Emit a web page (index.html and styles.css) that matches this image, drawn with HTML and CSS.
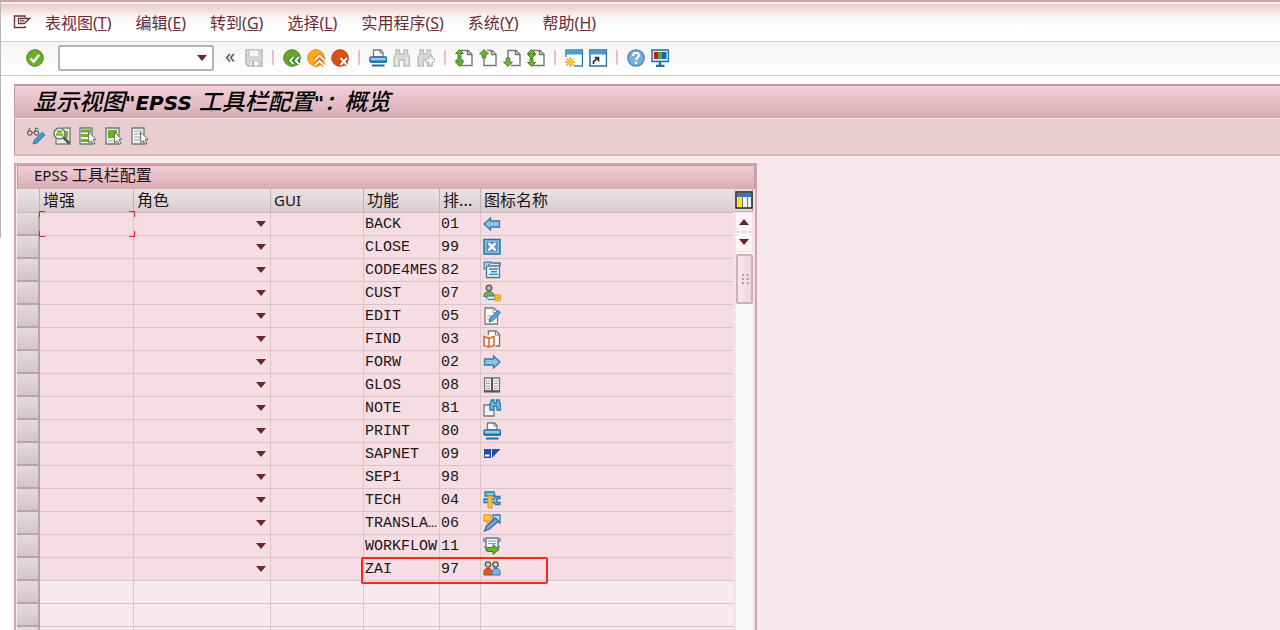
FILE: index.html
```
<!DOCTYPE html>
<html lang="zh-CN">
<head>
<meta charset="utf-8">
<title>显示视图"EPSS 工具栏配置"：概览</title>
<link rel="stylesheet" href="styles.css">
</head>
<body>
<svg class="sprite" aria-hidden="true">
  <symbol id="exit" viewBox="0 0 18 18"><path d="M12 4.500V3H1.500v11.500H12V13" fill="none" stroke="#6d323b" stroke-width="1.400"/><path d="M16.500 5.500H5.500v5h6zM7 7.800h4.500" fill="none" stroke="#6d323b" stroke-width="1.300"/></symbol>
  <symbol id="ok" viewBox="0 0 18 18"><circle cx="9" cy="9" r="8.300" fill="#69ae23" stroke="#4d7f32"/><path d="M4.500 9.500l3.200 3.200 5.500-7" fill="none" stroke="#fff" stroke-width="2.400"/></symbol>
  <symbol id="save" viewBox="0 0 18 18"><path d="M1 1h16v16H3l-2-2z" fill="#d9d9d9" stroke="#b8b8b8" stroke-width="1.500"/><path d="M4 1h10v7H4z" fill="#f7f7f7" stroke="#c0c0c0"/><path d="M5 12h9v5H5z" fill="#fff" stroke="#b8b8b8"/><path d="M7 13h2v4H7z" fill="#b0b0b0"/></symbol>
  <symbol id="back" viewBox="0 0 18 18"><circle cx="9" cy="9" r="8.300" fill="#65ab22" stroke="#3f8230"/><path d="M10.500 8L7 11.500l3.500 3.500M16 8l-3.500 3.500L16 15" fill="none" stroke="#39752b" stroke-width="4"/><path d="M10.500 8L7 11.500l3.500 3.500M16 8l-3.500 3.500L16 15" fill="none" stroke="#fff" stroke-width="2"/></symbol>
  <symbol id="up" viewBox="0 0 18 18"><circle cx="9" cy="9" r="8.300" fill="#ffad08" stroke="#e98420"/><path d="M8 11l4.500-4.500L17 11M8 16.500l4.500-4.500 4.500 4.500" fill="none" stroke="#e46b1d" stroke-width="4"/><path d="M8 11l4.500-4.500L17 11M8 16.500l4.500-4.500 4.500 4.500" fill="none" stroke="#fff" stroke-width="1.900"/></symbol>
  <symbol id="cancel" viewBox="0 0 18 18"><circle cx="9" cy="9" r="8.300" fill="#d95110" stroke="#b84320"/><path d="M9.500 9l6.500 7M16 9l-6.500 7" stroke="#a93312" stroke-width="4"/><path d="M9.500 9l6.500 7M16 9l-6.500 7" stroke="#fff" stroke-width="2.200"/></symbol>
  <symbol id="print" viewBox="0 0 18 18"><path d="M4.500 8V1h7l2.500 2.500V8z" fill="#fff" stroke="#777" stroke-width="1.300"/><path d="M11 1v3h3" fill="none" stroke="#777"/><rect x="1" y="8" width="16.500" height="5" rx="1" fill="#a3c7e5" stroke="#1d70a5" stroke-width="1.500"/><path d="M1 12.500h17" stroke="#1d70a5" stroke-width="2"/><path d="M3 16.500h12.500" stroke="#1d70a5" stroke-width="2"/></symbol>
  <symbol id="find" viewBox="0 0 18 18"><path d="M3 1h3.500v4H11V1h3.500v4L16.500 8v9H11v-6H6.500v6H1V8l2-3z" fill="#d9d9d9" stroke="#bcbcbc" stroke-width="1.300"/><path d="M3.500 9v7M14 9v7" stroke="#f3f3f3" stroke-width="1.500"/></symbol>
  <symbol id="findnext" viewBox="0 0 18 18"><path d="M3 1h3.500v4H10V1h3.500v4L15 8v9h-4.500v-6H6.500v6H1V8l2-3z" fill="#d9d9d9" stroke="#bcbcbc" stroke-width="1.300"/><path d="M12 7h3v3h3v3h-3v3h-3v-3H9v-3h3z" fill="#fff" stroke="#b3b3b3"/></symbol>
  <symbol id="doc" viewBox="0 0 18 18"><path d="M6 1.500h7l4 4v11H6" fill="#fff" stroke="#777" stroke-width="1.400"/><path d="M12.500 1.500v4H17" fill="none" stroke="#777" stroke-width="1.400"/></symbol>
  <symbol id="pfirst" viewBox="0 0 18 18"><use href="#doc"/><path d="M4.500 .5l4 4H6v4H3v-4H.5zM4.500 8l4 4H6v1h2.500l-4 4.500-4-4.500H3v-1H.5z" fill="#6db42c" stroke="#3c8b2e"/></symbol>
  <symbol id="pprev" viewBox="0 0 18 18"><path d="M5 9v7.500h12v-11l-4-4H8" fill="#fff" stroke="#777" stroke-width="1.400"/><path d="M12.500 1.500v4H17" fill="none" stroke="#777" stroke-width="1.400"/><path d="M5 .5L9.500 5H6.800v4H3.200V5H.5z" fill="#6db42c" stroke="#3c8b2e"/></symbol>
  <symbol id="pnext" viewBox="0 0 18 18"><path d="M5 9V1.500h8l4 4v11H8" fill="#fff" stroke="#777" stroke-width="1.400"/><path d="M12.500 1.500v4H17" fill="none" stroke="#777" stroke-width="1.400"/><path d="M5 17.500L9.500 13H6.800V9H3.200v4H.5z" fill="#6db42c" stroke="#3c8b2e"/></symbol>
  <symbol id="plast" viewBox="0 0 18 18"><use href="#doc"/><path d="M4.500 .5l4 4H6v1h2.500l-4 4-4-4H3v-1H.5zM4.500 17.500l4-4H6v-4H3v4H.5z" fill="#6db42c" stroke="#3c8b2e"/></symbol>
  <symbol id="newwin" viewBox="0 0 18 18"><rect x="1" y="1" width="16.500" height="16" fill="#fff" stroke="#1f72a6" stroke-width="1.300"/><path d="M1 3.500h16" stroke="#4b9cc8" stroke-width="4"/><path d="M0 8h9v10H0z" fill="#fff"/><path d="M5 8v10M0 13h10M1.500 9.500l7 7M8.500 9.500l-7 7" stroke="#f59c18" stroke-width="1.500"/><circle cx="5" cy="13" r="2.500" fill="#ffc32b"/></symbol>
  <symbol id="shortcut" viewBox="0 0 18 18"><rect x="1" y="1" width="16.500" height="16" fill="#fff" stroke="#1f72a6" stroke-width="1.500"/><path d="M1 3.500h16" stroke="#4b9cc8" stroke-width="4"/><path d="M4.500 15v-2.500L9 9M5.500 8.500h4v4" fill="none" stroke="#333" stroke-width="1.700"/></symbol>
  <symbol id="help" viewBox="0 0 18 18"><circle cx="9" cy="9" r="8.200" fill="#7baed8" stroke="#4d83b2" stroke-width="1.300"/><path d="M6 7c0-4 6-4 6-.8C12 8.500 9 8.500 9 11" fill="none" stroke="#fff" stroke-width="2"/><circle cx="9" cy="13.700" r="1.300" fill="#fff"/></symbol>
  <symbol id="monitor" viewBox="0 0 18 18"><rect x="1" y="1" width="16.500" height="11.500" fill="#d9ebf5" stroke="#1e70a3" stroke-width="1.500"/><path d="M3 3h4v7H3z" fill="#d3161c"/><path d="M7 3h4v7H7z" fill="#61a629"/><path d="M11 3h4.500v7H11z" fill="#1766b2"/><path d="M9 12v5M5 17h8.500" stroke="#1e70a3" stroke-width="2.400"/></symbol>
  <symbol id="glasspen" viewBox="0 0 18 18"><g fill="none" stroke="#666" stroke-width="1.200"><circle cx="2.800" cy="6" r="2.200"/><circle cx="9.500" cy="6" r="2.200"/><path d="M.8 5L3 1M7.500 5L9 1l2.500 1M5 5.500h2"/></g><path d="M6 17l1.500-4 7.500-7.500 3 2.500-8 8z" fill="#4b9ccb" stroke="#2776a7"/></symbol>
  <symbol id="magnify" viewBox="0 0 18 18"><path d="M9 1h8v16H3v-5" fill="#eee" stroke="#7e8779" stroke-width="1.500"/><path d="M12 4h3v7h-3z" fill="#72b927"/><circle cx="6.500" cy="6.500" r="5.500" fill="#f2f7eb" stroke="#777" stroke-width="1.500"/><path d="M4 4.500h5M3 7.500h7" stroke="#72b927" stroke-width="2.400"/><path d="M10.500 10.500l6 6" stroke="#555" stroke-width="2.800"/></symbol>
  <symbol id="cursor" viewBox="0 0 18 18"><path d="M9.500 5l7.500 7.500-3 .3 2 3.500-1.700 1-2-3.500-2.500 2z" fill="#fff" stroke="#666"/></symbol>
  <symbol id="selall" viewBox="0 0 18 18"><path d="M1 1h12v16H1z" fill="#f4f4f4" stroke="#777" stroke-width="1.300"/><path d="M2 4h10M2 8.500h9M2 13.500h8" stroke="#67b21b" stroke-width="3"/><use href="#cursor"/></symbol>
  <symbol id="selblock" viewBox="0 0 18 18"><path d="M1 1h13v16H1z" fill="#e9e9e9" stroke="#777" stroke-width="1.300"/><path d="M3 3h9v8H3z" fill="#67b21b"/><path d="M3 14h7" stroke="#bbb"/><use href="#cursor"/></symbol>
  <symbol id="desel" viewBox="0 0 18 18"><path d="M1 1h12v16H1z" fill="#f4f4f4" stroke="#777" stroke-width="1.300"/><path d="M3 4h8M3 7h7M3 10h6M3 13h6" stroke="#aaa"/><use href="#cursor"/></symbol>
  <symbol id="left" viewBox="0 0 18 18"><path d="M1 9l6.500-6v3h9v6h-9v3z" fill="#8fc1e1" stroke="#2d7bad" stroke-width="1.300"/></symbol>
  <symbol id="right" viewBox="0 0 18 18"><path d="M17 9l-6.500-6v3h-9v6h9v3z" fill="#8fc1e1" stroke="#2d7bad" stroke-width="1.300"/></symbol>
  <symbol id="close" viewBox="0 0 18 18"><path d="M1 1.500h16v14.500H1z" fill="#8fbddc" stroke="#2674a5" stroke-width="1.500"/><path d="M4 4.500h10v8.500H4z" fill="#679fc7" stroke="#2674a5" stroke-width=".7"/><path d="M5.500 5l7 7.500M12.500 5l-7 7.500" stroke="#fff" stroke-width="2.400"/></symbol>
  <symbol id="code" viewBox="0 0 18 18"><path d="M3.500 5h13v11.500h-13z" fill="#edf5fa" stroke="#4a7895" stroke-width="1.300"/><path d="M1 1h8L1 8.500z" fill="#a1cae6" stroke="#2979aa"/><path d="M9 2h8v3" fill="none" stroke="#2979aa" stroke-width="1.500"/><path d="M6 8h9M8 10.700h6M6 13.400h9" stroke="#3284b6" stroke-width="1.400"/></symbol>
  <symbol id="cust" viewBox="0 0 18 18"><path d="M1 12.500V10l3-2h4l3 2v2.500z" fill="#70b44b" stroke="#43822f"/><circle cx="6" cy="4" r="2.800" fill="#b6b6b6" stroke="#555" stroke-width="1.300"/><path d="M4 12h8v3.500H5L3.500 14z" fill="#d4e8f4" stroke="#3278a3"/><rect x="12" y="11" width="5.300" height="5.500" rx="1" fill="#ffd04a" stroke="#ee9c13" stroke-width="1.400"/><circle cx="14.600" cy="13.700" r="1" fill="#b97a10"/></symbol>
  <symbol id="edit" viewBox="0 0 18 18"><path d="M2 1h8.500l4 4v12H2z" fill="#fff" stroke="#777" stroke-width="1.300"/><path d="M10 1v4.500h4M4 12h3M4 9h4" fill="none" stroke="#999"/><path d="M6 15l1-4 8-7.500 2.500 2-8 8.500z" fill="#5aa5d0" stroke="#2876a8"/></symbol>
  <symbol id="book" viewBox="0 0 18 18"><path d="M5.500 5V1H13l3.500 3.500V16h-4" fill="#fff" stroke="#777" stroke-width="1.400"/><path d="M12.500 1v4H17" fill="none" stroke="#777"/><path d="M1 6.500l5 2 5-2v9l-5 1.500-5-1.500zM6 8.500V17" fill="#fff" stroke="#df6538" stroke-width="1.600"/></symbol>
  <symbol id="glos" viewBox="0 0 18 18"><path d="M1.500 2h15v13h-15z" fill="#f4f4f4" stroke="#777" stroke-width="1.300"/><path d="M1 15.500h16M9 2v14" stroke="#555" stroke-width="2"/><path d="M3 5h4M3 7.500h4M3 10h4M3 12.500h4M11 5h4M11 7.500h4M11 10h4M11 12.500h4" stroke="#888" stroke-dasharray="1.500 .6"/></symbol>
  <symbol id="note" viewBox="0 0 18 18"><path d="M8 6H1v11h10v-5" fill="#f4f4f4" stroke="#777" stroke-width="1.300"/><path d="M8.500 1H11v3h2.500V1H16l1.500 4v6H14V7h-3v4H7V5z" fill="#79b4d9" stroke="#297ba9" stroke-width="1.300"/></symbol>
  <symbol id="sap" viewBox="0 0 18 18"><path d="M1 4h7v9H1z" fill="#24509b"/><path d="M2 9.500h4.500v2H2z" fill="#fff"/><path d="M9 4h8.500L9 13z" fill="#24509b"/></symbol>
  <symbol id="tech" viewBox="0 0 18 18"><path d="M1 8h10l1.500-2.500h4.500v2h-3v4h3v2h-4.500L11 11.500H1z" fill="#89bfdf" stroke="#2879a8" stroke-width="1.300"/><path d="M2 1h9l1 4H2z" fill="#8fc2e0" stroke="#2879a8" stroke-width="1.300"/><path d="M5 5h4v12H5z" fill="#ffc043" stroke="#ed8e18"/></symbol>
  <symbol id="trans" viewBox="0 0 18 18"><path d="M1 1h7v6H6L4 9V7H1z" fill="#ffc94f" stroke="#f19a1d" stroke-width="1.300"/><path d="M10 1h7v8l-3-2h-4z" fill="#c0dff0" stroke="#2878aa" stroke-width="1.300"/><path d="M1.500 17l2-5 9-8 3 3-9 8z" fill="#78a4d3" stroke="#3d69a3" stroke-width="1.300"/></symbol>
  <symbol id="flow" viewBox="0 0 18 18"><path d="M3 1h12v12H3zM1 1v3h2M17 1v3h-2M1 10h2M17 10h-2" fill="#eef4f8" stroke="#607d90" stroke-width="1.400"/><path d="M5 4h8M5 6.500h8" stroke="#72a5c6"/><path d="M4 10.500h6V7.500l6 5-6 5v-3H4z" fill="#68b52c" stroke="#40802b"/></symbol>
  <symbol id="people" viewBox="0 0 18 18"><path d="M1 15v-4.500l2-2h4l2 2V15z" fill="#dd5c2c" stroke="#a9401e"/><path d="M9 15v-4.500l2-2h4l2 2V15z" fill="#80b5d8" stroke="#3673a4"/><circle cx="5" cy="4.500" r="2.700" fill="#d0d0d0" stroke="#555" stroke-width="1.300"/><circle cx="12.500" cy="4.500" r="2.700" fill="#d0d0d0" stroke="#555" stroke-width="1.300"/></symbol>
  <symbol id="columns" viewBox="0 0 18 18"><path d="M1 1h16v16H1z" fill="#eef2f5" stroke="#222" stroke-width="1.500"/><path d="M2 4h14" stroke="#2d7bb8" stroke-width="4"/><path d="M2 6h5v10H2z" fill="#ffe51e"/><path d="M7.500 2v14M12.500 2v14" stroke="#777"/></symbol>
</svg>

<nav class="menubar" aria-label="菜单">
  <button class="icon-btn" aria-label="系统菜单"><svg><use href="#exit"/></svg></button>
  <button class="menu">表视图<span class="key">(<u>T</u>)</span></button>
  <button class="menu">编辑<span class="key">(<u>E</u>)</span></button>
  <button class="menu">转到<span class="key">(<u>G</u>)</span></button>
  <button class="menu">选择<span class="key">(<u>L</u>)</span></button>
  <button class="menu">实用程序<span class="key">(<u>S</u>)</span></button>
  <button class="menu">系统<span class="key">(<u>Y</u>)</span></button>
  <button class="menu">帮助<span class="key">(<u>H</u>)</span></button>
</nav>

<div class="toolbar" role="toolbar" aria-label="标准工具栏">
  <button class="icon-btn" aria-label="回车"><svg><use href="#ok"/></svg></button>
  <div class="command"><input type="text" aria-label="命令"><button class="drop" aria-label="命令历史"></button></div>
  <button class="collapse" aria-label="收起">«</button>
  <button class="icon-btn" aria-label="保存"><svg><use href="#save"/></svg></button>
  <span class="sep"></span>
  <button class="icon-btn" aria-label="返回"><svg><use href="#back"/></svg></button>
  <button class="icon-btn" aria-label="退出"><svg><use href="#up"/></svg></button>
  <button class="icon-btn" aria-label="取消"><svg><use href="#cancel"/></svg></button>
  <span class="sep"></span>
  <button class="icon-btn" aria-label="打印"><svg><use href="#print"/></svg></button>
  <button class="icon-btn" aria-label="查找"><svg><use href="#find"/></svg></button>
  <button class="icon-btn" aria-label="继续查找"><svg><use href="#findnext"/></svg></button>
  <span class="sep"></span>
  <button class="icon-btn" aria-label="第一页"><svg><use href="#pfirst"/></svg></button>
  <button class="icon-btn" aria-label="上一页"><svg><use href="#pprev"/></svg></button>
  <button class="icon-btn" aria-label="下一页"><svg><use href="#pnext"/></svg></button>
  <button class="icon-btn" aria-label="最后一页"><svg><use href="#plast"/></svg></button>
  <span class="sep"></span>
  <button class="icon-btn" aria-label="新建会话"><svg><use href="#newwin"/></svg></button>
  <button class="icon-btn" aria-label="快捷方式"><svg><use href="#shortcut"/></svg></button>
  <span class="sep"></span>
  <button class="icon-btn" aria-label="帮助"><svg><use href="#help"/></svg></button>
  <button class="icon-btn" aria-label="定制布局"><svg><use href="#monitor"/></svg></button>
</div>

<main class="work">
  <header class="heading">
    <h1>显示视图<span class="latin">"EPSS </span>工具栏配置<span class="latin">"：</span>概览</h1>
  </header>
  <div class="actions" role="toolbar" aria-label="应用工具栏">
    <button class="icon-btn" aria-label="显示/更改"><svg><use href="#glasspen"/></svg></button>
    <button class="icon-btn" aria-label="明细"><svg><use href="#magnify"/></svg></button>
    <button class="icon-btn" aria-label="全选"><svg><use href="#selall"/></svg></button>
    <button class="icon-btn" aria-label="选择块"><svg><use href="#selblock"/></svg></button>
    <button class="icon-btn" aria-label="取消全选"><svg><use href="#desel"/></svg></button>
  </div>

  <section class="panel">
    <h2><span class="small">EPSS </span>工具栏配置</h2>
    <div class="grid">
      <table>
        <colgroup><col class="c-sel"><col class="c-enh"><col class="c-role"><col class="c-gui"><col class="c-func"><col class="c-sort"><col></colgroup>
        <thead><tr><th></th><th>增强</th><th>角色</th><th><span class="small">GUI</span></th><th>功能</th><th>排...</th><th>图标名称</th></tr></thead>
        <tbody>
          <tr><td class="sel"></td><td class="focus"><span class="corners"></span></td><td><select aria-label="角色"></select></td><td></td><td>BACK</td><td>01</td><td><svg><use href="#left"/></svg></td></tr>
          <tr><td class="sel"></td><td></td><td><select aria-label="角色"></select></td><td></td><td>CLOSE</td><td>99</td><td><svg><use href="#close"/></svg></td></tr>
          <tr><td class="sel"></td><td></td><td><select aria-label="角色"></select></td><td></td><td>CODE4MES</td><td>82</td><td><svg><use href="#code"/></svg></td></tr>
          <tr><td class="sel"></td><td></td><td><select aria-label="角色"></select></td><td></td><td>CUST</td><td>07</td><td><svg><use href="#cust"/></svg></td></tr>
          <tr><td class="sel"></td><td></td><td><select aria-label="角色"></select></td><td></td><td>EDIT</td><td>05</td><td><svg><use href="#edit"/></svg></td></tr>
          <tr><td class="sel"></td><td></td><td><select aria-label="角色"></select></td><td></td><td>FIND</td><td>03</td><td><svg><use href="#book"/></svg></td></tr>
          <tr><td class="sel"></td><td></td><td><select aria-label="角色"></select></td><td></td><td>FORW</td><td>02</td><td><svg><use href="#right"/></svg></td></tr>
          <tr><td class="sel"></td><td></td><td><select aria-label="角色"></select></td><td></td><td>GLOS</td><td>08</td><td><svg><use href="#glos"/></svg></td></tr>
          <tr><td class="sel"></td><td></td><td><select aria-label="角色"></select></td><td></td><td>NOTE</td><td>81</td><td><svg><use href="#note"/></svg></td></tr>
          <tr><td class="sel"></td><td></td><td><select aria-label="角色"></select></td><td></td><td>PRINT</td><td>80</td><td><svg><use href="#print"/></svg></td></tr>
          <tr><td class="sel"></td><td></td><td><select aria-label="角色"></select></td><td></td><td>SAPNET</td><td>09</td><td><svg><use href="#sap"/></svg></td></tr>
          <tr><td class="sel"></td><td></td><td><select aria-label="角色"></select></td><td></td><td>SEP1</td><td>98</td><td></td></tr>
          <tr><td class="sel"></td><td></td><td><select aria-label="角色"></select></td><td></td><td>TECH</td><td>04</td><td><svg><use href="#tech"/></svg></td></tr>
          <tr><td class="sel"></td><td></td><td><select aria-label="角色"></select></td><td></td><td>TRANSLA…</td><td>06</td><td><svg><use href="#trans"/></svg></td></tr>
          <tr><td class="sel"></td><td></td><td><select aria-label="角色"></select></td><td></td><td>WORKFLOW</td><td>11</td><td><svg><use href="#flow"/></svg></td></tr>
          <tr><td class="sel"></td><td></td><td><select aria-label="角色"></select></td><td></td><td class="marked">ZAI<span class="frame"></span></td><td>97</td><td><svg><use href="#people"/></svg></td></tr>
          <tr class="empty"><td class="sel"></td><td></td><td></td><td></td><td></td><td></td><td></td></tr>
          <tr class="empty"><td class="sel"></td><td></td><td></td><td></td><td></td><td></td><td></td></tr>
          <tr class="empty"><td class="sel"></td><td></td><td></td><td></td><td></td><td></td><td></td></tr>
        </tbody>
      </table>
      <div class="side">
        <button class="config" aria-label="表设置"><svg><use href="#columns"/></svg></button>
        <button class="step step-up" aria-label="向上滚动"></button>
        <button class="step" aria-label="向下滚动"></button>
        <div class="track"><div class="thumb"><svg viewBox="0 0 18 18"><path d="M7 4v10M11.500 4v10" stroke="#b99aa2" stroke-width="2" stroke-dasharray="2 2"/></svg></div></div>
      </div>
    </div>
  </section>
</main>
</body>
</html>
```
FILE: styles.css
```
* { box-sizing: border-box; }
body {
  margin: 0;
  padding-left: 1px;
  height: 100vh;
  overflow: hidden;
  display: flex;
  flex-direction: column;
  background: linear-gradient(#b9b4b6, #b9b4b6) 0 0 / 1px 238px no-repeat #fff;
  color: #1c1416;
  font: 16px/22px "Noto Sans CJK SC", sans-serif;
}
button {
  border: 0;
  padding: 0;
  background: none;
  font: inherit;
  color: inherit;
}
svg { display: block; width: 18px; height: 18px; }
.sprite { position: absolute; width: 0; height: 0; }
.icon-btn { width: 18px; height: 18px; flex: none; }
.small { font: 15px/16px "Noto Sans", sans-serif; }
.key { font: 16px/16px "Noto Sans", sans-serif; }

.menubar {
  display: flex;
  align-items: center;
  gap: 24px;
  height: 42px;
  flex: none;
  padding: 0 12px;
  border-top: 2px solid #c6a4ac;
  border-bottom: 1px solid #d6cfd1;
  background: linear-gradient(#f9eef0 0 2px, #e9c9cc 2px, #faf3f3 14px, #fff 24px);
  color: #6a2b35;
}
.menubar .icon-btn { margin-right: -10px; }
.menu { white-space: nowrap; }

.toolbar {
  display: flex;
  align-items: center;
  gap: 6px;
  height: 34px;
  flex: none;
  padding: 0 25px 2px;
  border-bottom: 1px solid #d6cfd1;
  background: linear-gradient(#f8f3f3, #fff);
}
.command {
  display: flex;
  align-items: center;
  width: 156px;
  height: 26px;
  margin: 0 2px 0 8px;
  border: 2px solid #b9b1b3;
  border-radius: 2px;
  background: #fff;
}
.command input { flex: 1; min-width: 0; border: 0; outline: 0; background: none; }
.drop, .step, select {
  background: url("data:image/svg+xml,%3Csvg xmlns='http://www.w3.org/2000/svg' width='10' height='6'%3E%3Cpath d='M0 0h10L5 6z' fill='%23692631'/%3E%3C/svg%3E") no-repeat center;
}
.drop { width: 20px; height: 20px; }
.collapse { width: 16px; margin-right: 1px; padding-bottom: 4px; font: 20px/18px "Noto Sans", sans-serif; color: #555; }
.sep { width: 2px; height: 15px; margin: 0 3px; background: #e7bfc5; }

.work {
  flex: 1;
  min-height: 0;
  overflow: hidden;
  padding: 8px 0 0 13px;
  background: linear-gradient(90deg, #fff 13px, transparent 13px), linear-gradient(#fcf6f6, #fff 8px, #f7e9ec 8px);
}
.heading {
  border: 1px solid #c49ba5;
  border-top-width: 2px;
  border-right: 0;
  border-bottom: 1px solid #f4e3e7;
  background: linear-gradient(#f0d1d8, #d9acb7);
}
h1 {
  margin: 0;
  padding: 0 0 4px 18px;
  font: italic 500 23px/28px "Noto Sans CJK SC", sans-serif;
  color: #000;
  white-space: nowrap;
}
.latin { font: italic bold 20px/20px "DejaVu Sans", "Noto Sans CJK SC", sans-serif; }
.actions {
  display: flex;
  gap: 8px;
  padding: 8px 12px 9px;
  border-left: 1px solid #c49ba5;
  border-bottom: 2px solid #d6b7bf;
  background: #e8cdd3;
}

.panel {
  max-width: 743px;
  margin-top: 7px;
  border: 2px solid #d3a3ae;
  border-bottom: 0;
  padding-left: 1px;
}
h2 {
  margin: 0;
  padding: 0 0 6px 16px;
  border: 1px solid #c796a3;
  border-bottom: 0;
  background: linear-gradient(#efd0d7, #d9aab6);
  font-size: 16px;
  font-weight: 400;
  line-height: 16px;
}
.grid { display: grid; grid-template-columns: 1fr 22px; }
table { width: 100%; table-layout: fixed; border-collapse: separate; border-spacing: 0; }
.c-sel { width: 23px; }
.c-enh { width: 94px; }
.c-role { width: 137px; }
.c-gui { width: 93px; }
.c-func { width: 76px; }
.c-sort { width: 41px; }
th {
  height: 24px;
  padding: 0 3px 3px;
  border-right: 1px solid #bfb1b5;
  border-bottom: 1px solid #c9b6bb;
  background: linear-gradient(#e9e3e4, #d8cccf);
  font-weight: 400;
  line-height: 20px;
  text-align: left;
  white-space: nowrap;
}
th:last-child, td:last-child { border-right: 0; }
td {
  height: 23px;
  padding: 2px 0 0 1px;
  border-right: 1px solid #dac6cb;
  border-bottom: 1px solid #d8c3c8;
  background: #f5dde3;
  font: 15px/20px "Liberation Mono", monospace;
  white-space: nowrap;
}
td svg { margin: 0 1px 2px; }
.empty td { background: #f7e9ec; }
td.sel {
  border-right: 2px solid #b7a4a9;
  border-bottom: 2px solid #b7a4a9;
  background: linear-gradient(#e4dadc, #d3c5c8);
}
select {
  display: block;
  appearance: none;
  width: 100%;
  height: 18px;
  margin: 0 0 2px;
  padding: 0;
  border: 0;
  background-position: right 4px center;
}
.focus, .marked { position: relative; }
.corners {
  position: absolute;
  z-index: 1;
  inset: -2px -2px -2px -1px;
  background:
    linear-gradient(#e6202a, #e6202a) 0 0 / 6px 1px,
    linear-gradient(#e6202a, #e6202a) 0 0 / 1px 6px,
    linear-gradient(#e6202a, #e6202a) 100% 0 / 6px 1px,
    linear-gradient(#e6202a, #e6202a) 100% 0 / 1px 6px,
    linear-gradient(#e6202a, #e6202a) 0 100% / 6px 1px,
    linear-gradient(#e6202a, #e6202a) 0 100% / 1px 6px,
    linear-gradient(#e6202a, #e6202a) 100% 100% / 6px 1px,
    linear-gradient(#e6202a, #e6202a) 100% 100% / 1px 6px;
  background-repeat: no-repeat;
}
.frame {
  position: absolute;
  z-index: 1;
  top: -1px;
  left: -3px;
  width: 187px;
  height: 27px;
  border: 2px solid #f7291f;
  border-radius: 2px;
}

.side { display: flex; flex-direction: column; padding-right: 2px; background: #f3e2e6; }
.config {
  height: 23px;
  padding: 2px 2px;
  border-right: 1px solid #c9a7af;
  border-bottom: 1px solid #c9a7af;
  background: #e3d8da;
}
.step { height: 18px; margin: 1px 1px 1px 3px; background-color: #fbf3f4; }
.step-up { transform: rotate(180deg); }
.track { flex: 1; margin-left: 3px; padding-top: 2px; background: #fbf8f8; }
.thumb {
  display: flex;
  align-items: center;
  justify-content: center;
  height: 50px;
  border: 2px solid #cdb1b8;
  border-radius: 2px;
  background: linear-gradient(90deg, #f8e9ec, #ecd6db);
}
.thumb svg { flex: none; }
```
